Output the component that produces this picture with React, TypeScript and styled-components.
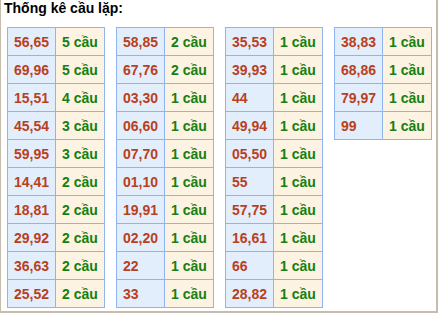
import styled, { createGlobalStyle } from "styled-components";

const GlobalStyle = createGlobalStyle`
  html, body {
    margin: 0;
    padding: 0;
    background: #ffffff;
    font-family: "Liberation Sans", Arial, sans-serif;
  }
`;

const columns: [string, number][][] = [
  [
    ["56,65", 5],
    ["69,96", 5],
    ["15,51", 4],
    ["45,54", 3],
    ["59,95", 3],
    ["14,41", 2],
    ["18,81", 2],
    ["29,92", 2],
    ["36,63", 2],
    ["25,52", 2],
  ],
  [
    ["58,85", 2],
    ["67,76", 2],
    ["03,30", 1],
    ["06,60", 1],
    ["07,70", 1],
    ["01,10", 1],
    ["19,91", 1],
    ["02,20", 1],
    ["22", 1],
    ["33", 1],
  ],
  [
    ["35,53", 1],
    ["39,93", 1],
    ["44", 1],
    ["49,94", 1],
    ["05,50", 1],
    ["55", 1],
    ["57,75", 1],
    ["16,61", 1],
    ["66", 1],
    ["28,82", 1],
  ],
  [
    ["38,83", 1],
    ["68,86", 1],
    ["79,97", 1],
    ["99", 1],
  ],
];

function App() {
  return (
    <>
      <GlobalStyle />
      <Box>
        <Title>Thống kê cầu lặp:</Title>
        <Tables>
          {columns.map((rows, i) => (
            <Table key={i}>
              <tbody>
                {rows.map(([pair, count]) => (
                  <tr key={pair}>
                    <PairCell>{pair}</PairCell>
                    <CountCell>{count} cầu</CountCell>
                  </tr>
                ))}
              </tbody>
            </Table>
          ))}
        </Tables>
      </Box>
    </>
  );
}

const Box = styled.div`
  box-sizing: border-box;
  width: 438px;
  height: 313px;
  border-left: 1px solid #c6bcae;
  border-right: 2px solid #c6bcae;
  border-bottom: 2px solid #c6bcae;
  background: #ffffff;
  overflow: hidden;
`;

const Title = styled.div`
  font-size: 14px;
  font-weight: bold;
  color: #000000;
  line-height: 16px;
  padding: 0 0 0 3px;
  height: 16px;
`;

const Tables = styled.div`
  display: flex;
  align-items: flex-start;
  gap: 11px;
  padding: 11px 0 0 6px;
`;

const Table = styled.table`
  border-collapse: collapse;
  width: 98px;
  border: 1px solid #8fb4ef;
`;

const Cell = styled.td`
  border: 1px solid #8fb4ef;
  height: 28px;
  padding: 0 0 0 6px;
  font-size: 14px;
  font-weight: bold;
  line-height: 16px;
  text-align: left;
  white-space: nowrap;
  box-sizing: border-box;
`;

const PairCell = styled(Cell)`
  width: 48px;
  background: #e3eefc;
  color: #b9401c;
`;

const CountCell = styled(Cell)`
  background: #fdf3e2;
  color: #15800f;
`;

export default App;
